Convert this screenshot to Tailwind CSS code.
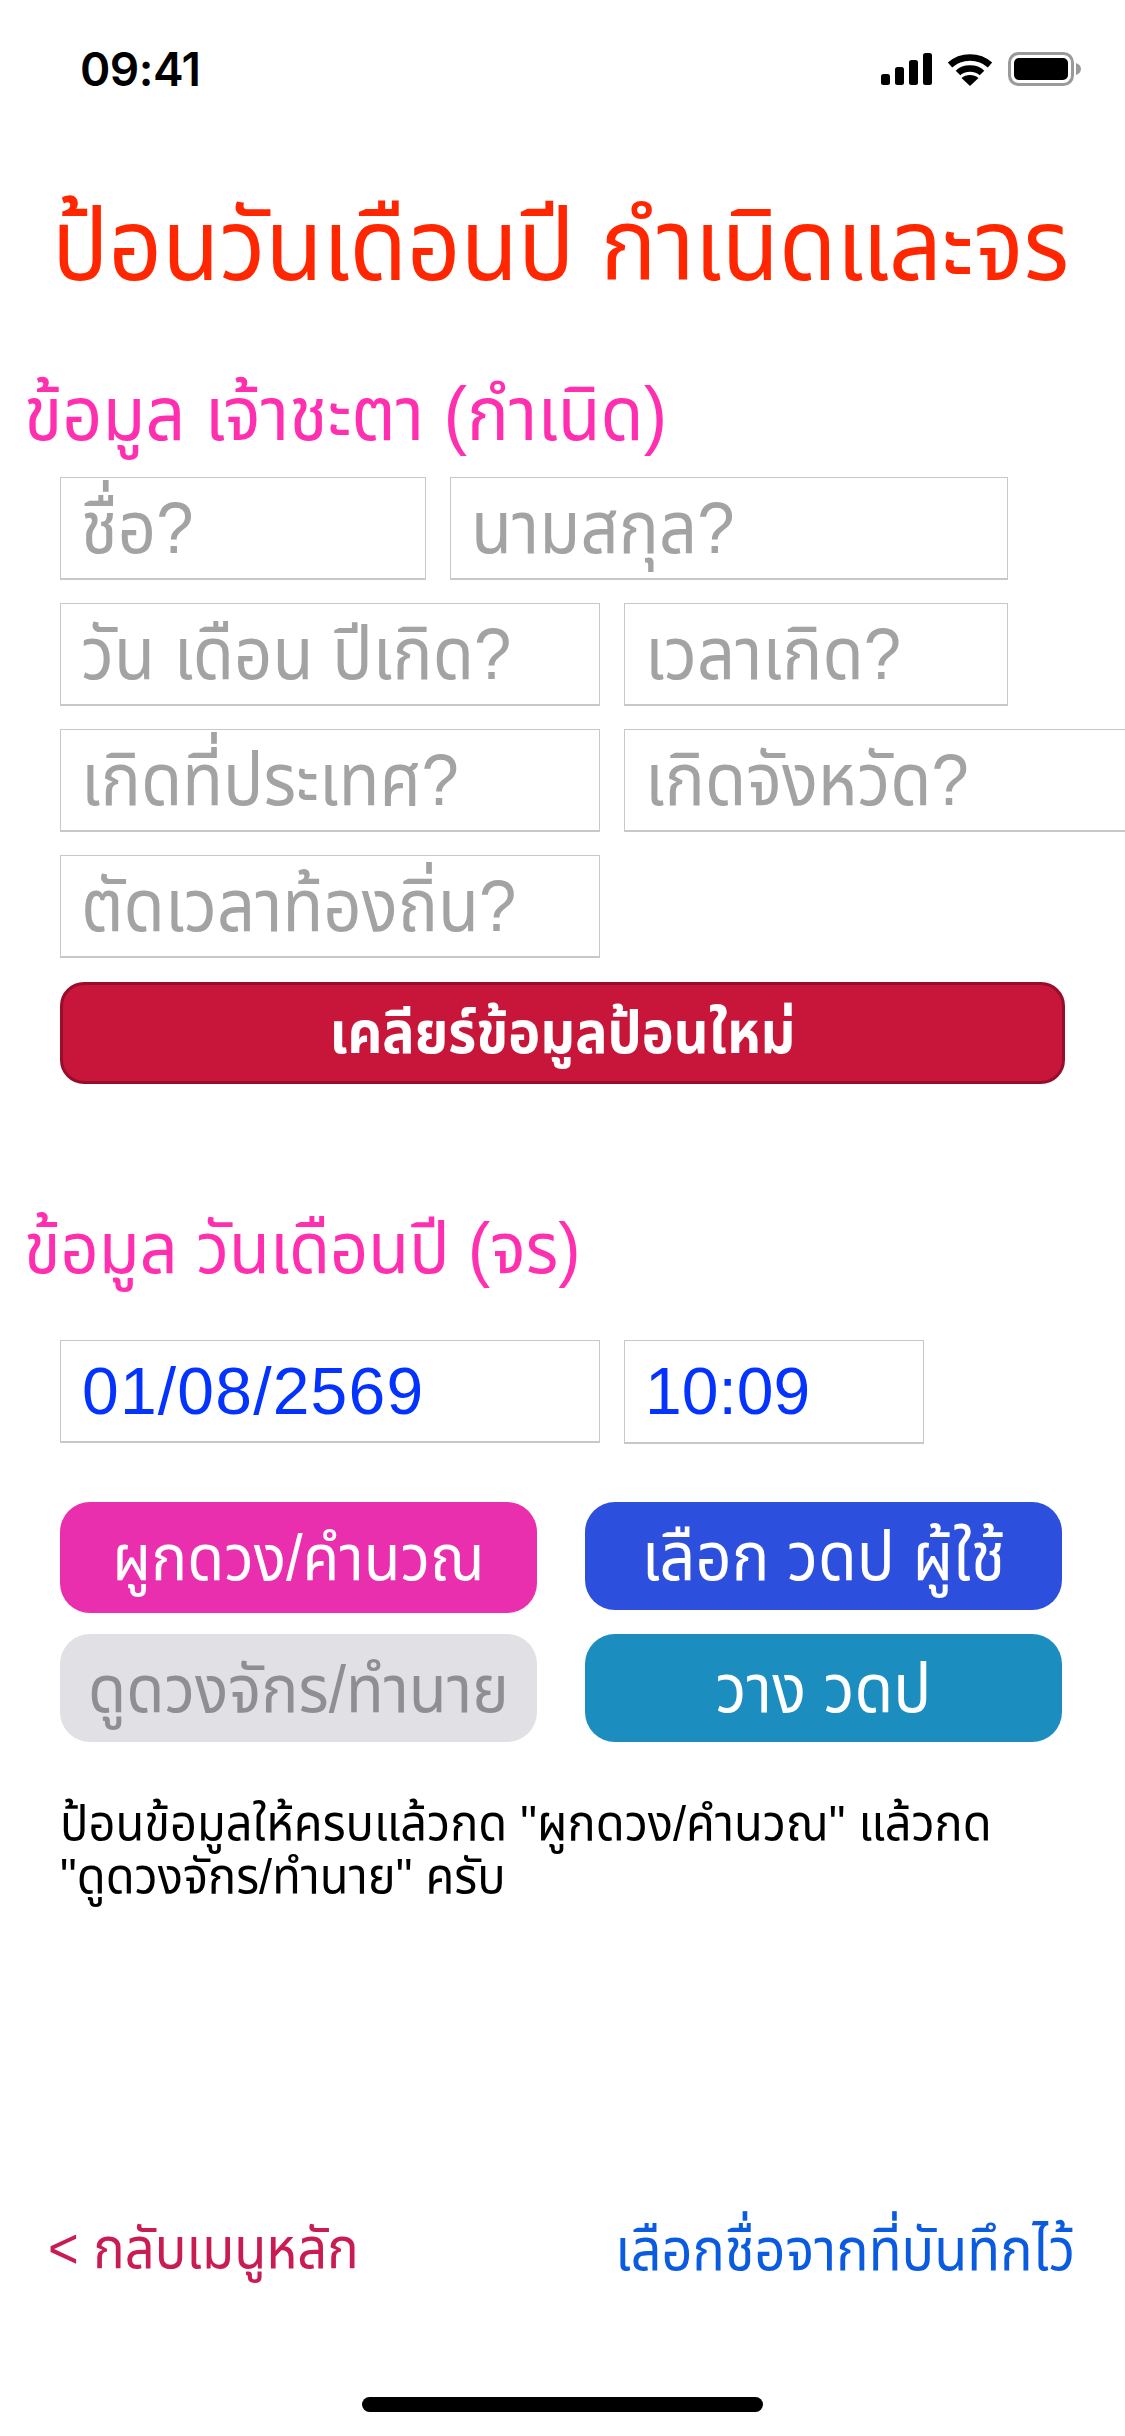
<!DOCTYPE html>
<html lang="th">
<head>
<meta charset="utf-8">
<script src="https://cdn.jsdelivr.net/npm/@tailwindcss/browser@4"></script>
<title>ป้อนวันเดือนปี</title>
</head>
<body class="bg-white">
<div class="relative w-[1125px] h-[2436px] overflow-hidden bg-white font-['Liberation_Sans','Noto_Sans','Noto_Sans_Thai','DejaVu_Sans',sans-serif]">
  <header class="flex items-center justify-between h-[52px] mt-[43px] pl-[80px] pr-[43px]">
    <span class="font-['Inter',sans-serif] font-semibold text-[46px] leading-none tracking-[-0.5px] text-black">09:41</span>
    <div class="flex items-center gap-[15px]">
      <svg width="51" height="32" viewBox="0 0 51 32" fill="#000"><rect x="0" y="21" width="9" height="11" rx="2.5"/><rect x="14" y="14" width="9" height="18" rx="2.5"/><rect x="28" y="7" width="9" height="25" rx="2.5"/><rect x="42" y="0" width="9" height="32" rx="2.5"/></svg>
      <svg width="46" height="33" viewBox="0 0 46 33" fill="none"><path d="M3 12C14 2 32 2 43 12" stroke="#000" stroke-width="6.5"/><path d="M11 20C17 14 29 14 35 20" stroke="#000" stroke-width="6.5"/><path d="M14.500 25L23 33L31.500 25C27 21 19 21 14.500 25Z" fill="#000"/></svg>
      <svg width="74" height="34" viewBox="0 0 74 34" fill="none"><rect x="1.500" y="1.500" width="63" height="31" rx="9" stroke="#9a9a9a" stroke-width="3"/><rect x="6" y="6" width="54" height="22" rx="5" fill="#000"/><path d="M68 11C71 12 73 14 73 17C73 20 71 22 68 23Z" fill="#9a9a9a"/></svg>
    </div>
  </header>

  <h1 class="mt-[98px] -translate-x-[2px] text-center text-[93.5px] leading-[104px] font-normal text-[#ff2600] scale-y-[1.08]">ป้อนวันเดือนปี กำเนิดและจร</h1>

  <h2 class="mt-[81px] pl-[24px] text-[70px] leading-[72px] font-normal text-[#ff2fb0] scale-y-[1.08]">ข้อมูล เจ้าชะตา (กำเนิด)</h2>

  <section class="mt-[27px] pl-[60px] flex flex-col gap-[23px] text-[67px] text-[#a3a3a3]">
    <div class="flex gap-[24px] h-[103px]">
      <div class="w-[366px] shrink-0 border border-b-2 border-[#c8c8c8] pl-[20px] flex items-center"><span class="scale-y-[1.08]">ชื่อ?</span></div>
      <div class="w-[558px] shrink-0 border border-b-2 border-[#c8c8c8] pl-[20px] flex items-center"><span class="scale-y-[1.08]">นามสกุล?</span></div>
    </div>
    <div class="flex gap-[24px] h-[103px]">
      <div class="w-[540px] shrink-0 border border-b-2 border-[#c8c8c8] pl-[20px] flex items-center"><span class="scale-y-[1.08]">วัน เดือน ปีเกิด?</span></div>
      <div class="w-[384px] shrink-0 border border-b-2 border-[#c8c8c8] pl-[20px] flex items-center"><span class="scale-y-[1.08]">เวลาเกิด?</span></div>
    </div>
    <div class="flex gap-[24px] h-[103px]">
      <div class="w-[540px] shrink-0 border border-b-2 border-[#c8c8c8] pl-[20px] flex items-center"><span class="scale-y-[1.08]">เกิดที่ประเทศ?</span></div>
      <div class="w-[540px] shrink-0 border border-b-2 border-[#c8c8c8] pl-[20px] flex items-center"><span class="scale-y-[1.08]">เกิดจังหวัด?</span></div>
    </div>
    <div class="flex h-[103px]">
      <div class="w-[540px] shrink-0 border border-b-2 border-[#c8c8c8] pl-[20px] flex items-center"><span class="scale-y-[1.08]">ตัดเวลาท้องถิ่น?</span></div>
    </div>
  </section>

  <button class="block mt-[24px] ml-[60px] w-[1005px] h-[102px] rounded-[24px] border-[3px] border-[#990d2c] bg-[#c8153a] text-white font-bold text-[54px]"><span class="inline-block scale-y-[1.08]">เคลียร์ข้อมูลป้อนใหม่</span></button>

  <h2 class="mt-[128px] pl-[24px] text-[66.7px] leading-[72px] font-normal text-[#ff2fb0] scale-y-[1.08]">ข้อมูล วันเดือนปี (จร)</h2>

  <section class="mt-[56px] pl-[60px] flex items-start gap-[24px] text-[66px] text-[#0433ff]">
    <div class="w-[540px] h-[103px] border border-b-2 border-[#c8c8c8] pl-[21px] flex items-center tracking-[1.2px]">01/08/2569</div>
    <div class="w-[300px] h-[104px] border border-b-2 border-[#c8c8c8] pl-[20px] flex items-center">10:09</div>
  </section>

  <section class="mt-[58px] pl-[60px] grid grid-cols-[477px_477px] gap-x-[48px] gap-y-[21px] items-start">
    <button class="h-[111px] rounded-[30px] bg-[#ea2fae] text-white text-[60px]"><span class="inline-block scale-y-[1.08]">ผูกดวง/คำนวณ</span></button>
    <button class="h-[108px] rounded-[30px] bg-[#2d4fdd] text-white text-[63px]"><span class="inline-block scale-y-[1.08]">เลือก วดป ผู้ใช้</span></button>
    <button class="h-[108px] rounded-[30px] bg-[#e0e0e5] text-[#8e8e93] text-[62px]"><span class="inline-block scale-y-[1.08]">ดูดวงจักร/ทำนาย</span></button>
    <button class="h-[108px] rounded-[30px] bg-[#1c8dbf] text-white text-[63px]"><span class="inline-block scale-y-[1.08]">วาง วดป</span></button>
  </section>

  <p class="mt-[55px] ml-[60px] w-[1005px] text-[47px] leading-[49px] text-black scale-y-[1.08] origin-top">ป้อนข้อมูลให้ครบแล้วกด "ผูกดวง/คำนวณ" แล้วกด<br>"ดูดวงจักร/ทำนาย" ครับ</p>

  <footer class="absolute left-[48px] right-[50px] top-[2214px] flex justify-between leading-[70px]">
    <span class="text-[#c91c52] text-[52.5px] scale-y-[1.08]">&lt; กลับเมนูหลัก</span>
    <span class="text-[#0a5be0] text-[54px] scale-y-[1.08]">เลือกชื่อจากที่บันทึกไว้</span>
  </footer>

  <div class="absolute left-[362px] top-[2397px] w-[401px] h-[15px] rounded-full bg-black"></div>
</div>
</body>
</html>
